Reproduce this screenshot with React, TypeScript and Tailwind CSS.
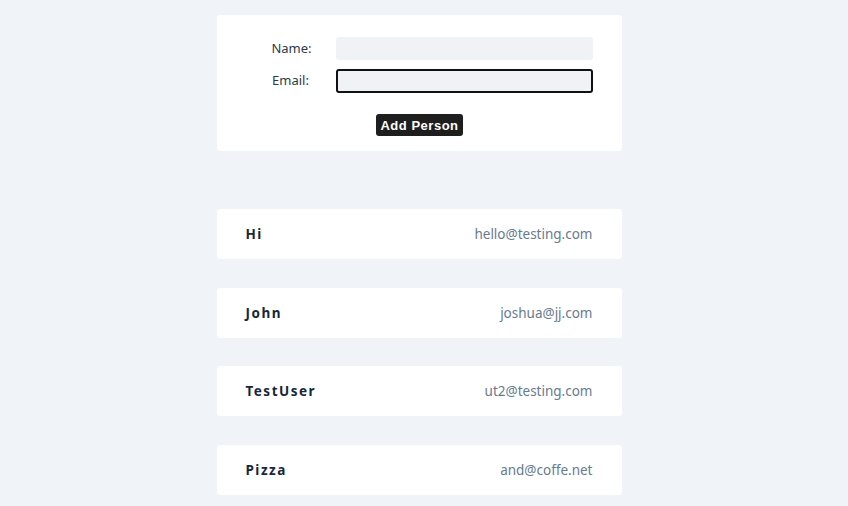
import React from "react";

const people = [
  { name: "Hi", email: "hello@testing.com" },
  { name: "John", email: "joshua@jj.com" },
  { name: "TestUser", email: "ut2@testing.com" },
  { name: "Pizza", email: "and@coffe.net" },
];

export default function App() {
  return (
    <div
      className="min-h-[506px] w-full bg-[#f0f4f8] flex justify-center"
      style={{ fontFamily: '"Noto Sans", "Open Sans", sans-serif' }}
    >
      <div className="w-[405px] ml-[-10px] pt-[15px]">
        <div className="bg-white rounded-[3px] pt-[22px] pb-[15px] px-[29px]">
          <div className="flex items-center h-[23px]">
            <label className="w-[90px] text-center text-[13px] text-[#2b3a4a] pl-[2px] pt-[1px]">Name:</label>
            <div className="w-[257px] h-[23px] bg-[#f0f3f6] rounded-[3px]" />
          </div>
          <div className="flex items-center h-[23px] mt-[9px]">
            <label className="w-[90px] text-center text-[13px] text-[#2b3a4a] pt-[1px]">Email:</label>
            <div className="w-[257px] h-[24px] bg-[#f0f3f6] rounded-[3px] border-2 border-[#111]" />
          </div>
          <div className="flex justify-center mt-[22px]">
            <button
              className="h-[22px] px-[4px] bg-[#1e1e1e] text-white text-[13px] font-bold rounded-[3px] tracking-[0.04em] leading-none ml-[1px]"
              style={{ fontFamily: '"Liberation Sans", Arial, sans-serif' }}
            >
              Add Person
            </button>
          </div>
        </div>
        <div className="mt-[58px] flex flex-col gap-[28.67px]">
          {people.map((p) => (
            <div
              key={p.name}
              className="bg-white rounded-[3px] h-[50px] px-[29px] flex items-center justify-between"
            >
              <span className="text-[13.5px] font-bold tracking-[0.11em] text-[#17263a]">{p.name}</span>
              <span className="text-[13.5px] text-[#677b90]">{p.email}</span>
            </div>
          ))}
        </div>
      </div>
    </div>
  );
}
